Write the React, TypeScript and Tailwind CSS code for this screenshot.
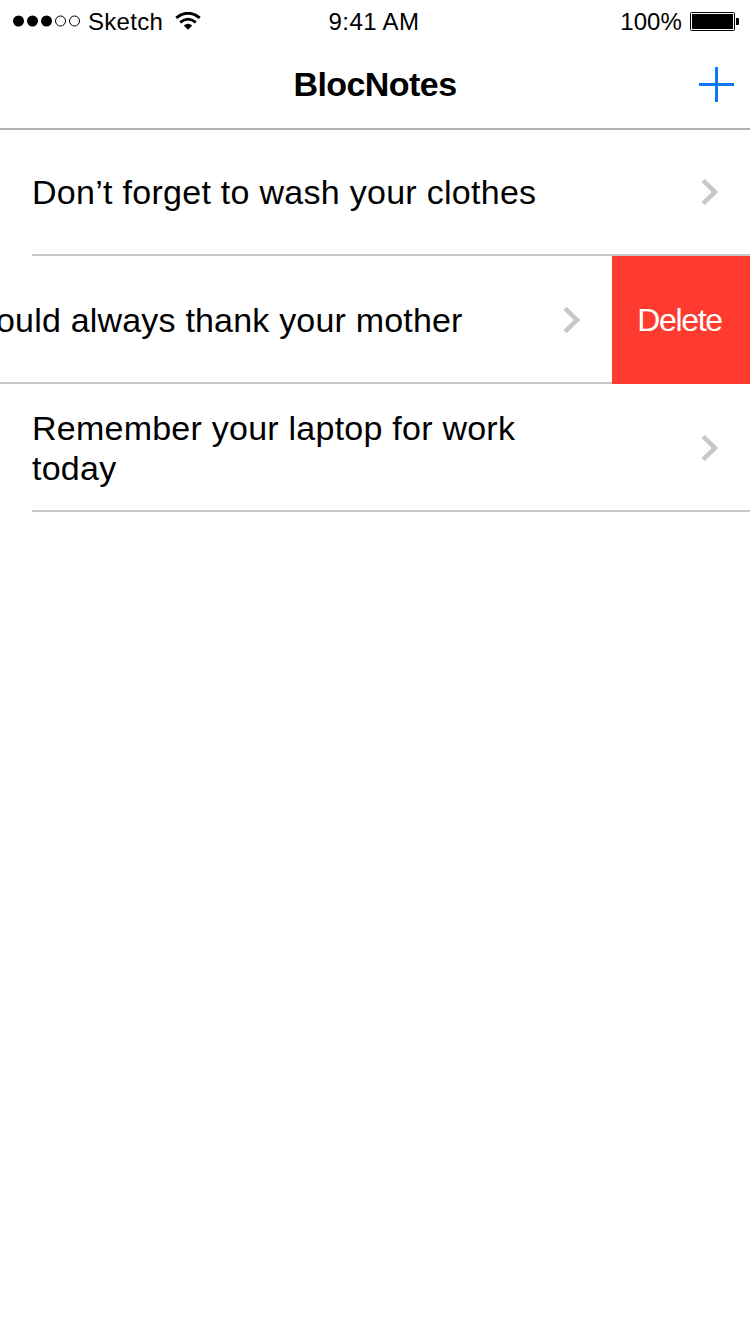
import React from "react";

function Chevron() {
  return (
    <svg width="18" height="28" viewBox="0 0 18 28" className="shrink-0" fill="none">
      <path d="M3 2.4 L15 14 L3 25.6" stroke="#c7c7cc" strokeWidth="4.6" />
    </svg>
  );
}

function StatusBar() {
  return (
    <div className="grid h-10 grid-cols-[1fr_auto_1fr] items-center pt-[3px] text-[24px] leading-none">
      <div className="flex items-center pl-3">
        <svg width="70" height="14" viewBox="0 0 70 14" className="shrink-0">
          <circle cx="6.5" cy="6" r="5.5" />
          <circle cx="20.5" cy="6" r="5.5" />
          <circle cx="34.5" cy="6" r="5.5" />
          <circle cx="48.5" cy="6" r="5" fill="none" stroke="#000" />
          <circle cx="62.5" cy="6" r="5" fill="none" stroke="#000" />
        </svg>
        <span className="ml-1.5 tracking-[0.3px]">Sketch</span>
        <svg width="28" height="20" viewBox="0 0 28 20" className="ml-3 shrink-0" fill="none" stroke="#000" strokeWidth="2.8">
          <path d="M1.2 5.8 Q13 -3.4 24.8 5.8" />
          <path d="M5.2 10.4 Q13 3.8 20.8 10.4" />
          <path d="M8.8 13.6 Q13 9.8 17.2 13.6 L13 17.8Z" fill="#000" stroke="none" />
        </svg>
      </div>
      <span className="-mr-px pr-[3px] tracking-[0.4px]">9:41 AM</span>
      <div className="flex items-center justify-end pr-[11px]">
        <span className="tracking-[0.1px]">100%</span>
        <svg width="49" height="20" viewBox="0 0 49 20" className="ml-2">
          <rect x="0.5" y="0.5" width="44" height="18" rx="1" fill="none" stroke="#000" />
          <rect x="2" y="2" width="41" height="15" />
          <path d="M46 6h2q1 0 1 1v5q0 1-1 1h-2z" />
        </svg>
      </div>
    </div>
  );
}

export default function App() {
  return (
    <div className="flex h-[1334px] w-[750px] flex-col overflow-hidden bg-white font-['Liberation_Sans',Arial,sans-serif] text-black">
      <StatusBar />
      <header className="grid h-[90px] grid-cols-[1fr_auto_1fr] items-center border-b-2 border-[#b2b2b2]">
        <span />
        <h1 className="text-[34px] font-bold tracking-[-0.55px]">BlocNotes</h1>
        <svg width="35" height="35" viewBox="0 0 35 35" className="mt-px mr-4 justify-self-end">
          <path d="M0 17.5H35M17.5 0V35" stroke="#0d7af5" strokeWidth="3" />
        </svg>
      </header>
      <main className="text-[34px] leading-10">
        <div className="ml-8 flex h-[126px] items-center justify-between border-b-2 border-[#c8c7cc] pr-8">
          <span className="tracking-[0.28px]">Don’t forget to wash your clothes</span>
          <Chevron />
        </div>
        <div className="flex h-32">
          <div className="flex w-[612px] items-center justify-between border-b-2 border-[#c8c7cc] pt-0.5 pr-8">
            <span className="-ml-1 whitespace-nowrap tracking-[0.19px]">ould always thank your mother</span>
            <Chevron />
          </div>
          <div className="flex w-[138px] items-center justify-center bg-[#ff3b30] pr-[3px] text-[32px] tracking-[-1.3px] text-white">Delete</div>
        </div>
        <div className="ml-8 flex h-32 items-center justify-between border-b-2 border-[#c8c7cc] pt-0.5 pr-8">
          <span className="w-[520px] tracking-[0.24px]">Remember your laptop for work today</span>
          <Chevron />
        </div>
      </main>
    </div>
  );
}
